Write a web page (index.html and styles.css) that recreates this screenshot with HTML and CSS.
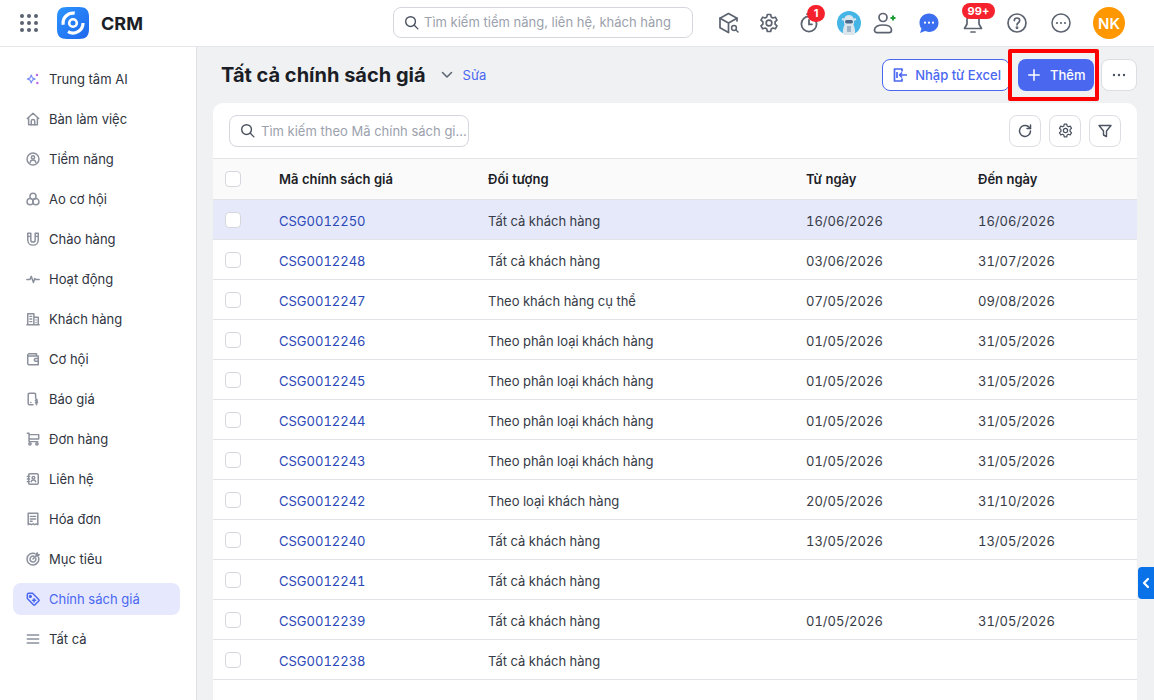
FILE: index.html
```html
<!DOCTYPE html>
<html lang="vi">
<head>
    <meta charset="UTF-8">
    <meta name="viewport" content="width=device-width, initial-scale=1.0">
    <title>Tất cả chính sách giá</title>
    <link rel="stylesheet" href="styles.css">
</head>
<body>

<header class="topbar">
    <div class="brand">
        <svg class="apps-icon" width="18" height="18" viewBox="0 0 18 18" fill="#5c6370">
            <circle cx="2" cy="2" r="2"/><circle cx="9" cy="2" r="2"/><circle cx="16" cy="2" r="2"/>
            <circle cx="2" cy="9" r="2"/><circle cx="9" cy="9" r="2"/><circle cx="16" cy="9" r="2"/>
            <circle cx="2" cy="16" r="2"/><circle cx="9" cy="16" r="2"/><circle cx="16" cy="16" r="2"/>
        </svg>
        <svg class="logo" width="32" height="32" viewBox="0 0 32 32">
            <defs>
                <linearGradient id="logoGrad" x1="0" y1="0" x2="1" y2="1">
                    <stop offset="0" stop-color="#2b95ff"/>
                    <stop offset="1" stop-color="#1f66ee"/>
                </linearGradient>
            </defs>
            <path d="M10 0h12c7 0 10 3 10 10v12c0 7-3 10-10 10H10C3 32 0 29 0 22V10C0 3 3 0 10 0z" fill="url(#logoGrad)"/>
            <g fill="none" stroke="#fff" stroke-width="3.200">
                <path d="M17.700 6.200A10 10 0 0 0 6.200 17.700"/>
                <path d="M11 24.700A10 10 0 0 0 26 16"/>
                <circle cx="16" cy="16" r="3.800" stroke-width="2.600"/>
            </g>
        </svg>
        <span class="brand-name">CRM</span>
    </div>
    <div class="top-search">
        <svg width="15" height="15" viewBox="0 0 16 16" fill="none" stroke="#4b5260" stroke-width="1.500" stroke-linecap="round"><circle cx="7" cy="7" r="5.200"/><path d="M11 11l3.800 3.800"/></svg>
        <span>Tìm kiếm tiềm năng, liên hệ, khách hàng</span>
    </div>
    <div class="top-icons">
        <div class="top-icon">
            <svg width="22" height="22" viewBox="0 0 22 22" fill="none" stroke="#5c6370" stroke-width="1.700" stroke-linejoin="round" stroke-linecap="round"><path d="M19 9V6.200L10.500 1.500 2 6.200v9.600l8.500 4.700"/><path d="M2 6.200l8.500 4.800L19 6.200M10.500 11v9"/><circle cx="16" cy="16" r="2.400" stroke-width="1.500"/><path d="M18 18l2 2" stroke-width="1.500"/></svg>
        </div>
        <div class="top-icon">
            <svg width="20" height="20" viewBox="0 0 24 24" fill="none" stroke="#5c6370" stroke-width="2" stroke-linejoin="round"><circle cx="12" cy="12" r="3.400"/><path d="M10 1.800h4l.7 3.100 1.900 1.100 3-1 2 3.500-2.300 2.100v2.800l2.300 2.100-2 3.500-3-1-1.900 1.100-.7 3.100h-4l-.7-3.100-1.900-1.100-3 1-2-3.500 2.300-2.100v-2.800L2.400 8.500l2-3.500 3 1 1.900-1.100z"/></svg>
        </div>
        <div class="top-icon">
            <svg width="20" height="20" viewBox="0 0 20 20" fill="none" stroke="#5c6370" stroke-width="1.800" stroke-linecap="round"><circle cx="10" cy="11" r="7.600"/><path d="M10 7v4.300h3M8 1.200h4"/></svg>
            <span class="badge">1</span>
        </div>
        <div class="top-icon">
            <svg width="24" height="24" viewBox="0 0 24 24">
                <circle cx="12" cy="12" r="12" fill="#45b5e6"/>
                <path d="M6 23c-.5-4 .5-7 1.500-9C6 9 7.500 4 12 4s6 5 4.500 10c1 2 2 5 1.500 9a12 12 0 0 1-12 0z" fill="#dbe5ec"/>
                <path d="M5 8l3 1M19 8l-3 1" stroke="#dbe5ec" stroke-width="2"/>
                <rect x="8" y="9" width="8" height="3.500" rx="1.700" fill="#4a6a8c"/>
                <path d="M10 15h4v6h-4z" fill="#9db4c8"/>
            </svg>
        </div>
        <div class="top-icon person">
            <svg width="24" height="22" viewBox="0 0 24 22" fill="none" stroke="#5c6370" stroke-width="1.700"><circle cx="11" cy="5.500" r="4"/><path d="M2.500 18c0-3.200 3.600-5 8.500-5s8.500 1.800 8.500 5c0 1.600-1 2.700-2.500 2.700H5c-1.500 0-2.500-1.100-2.500-2.700z"/><path d="M18.500 6h5M21 3.500v5" stroke="#1e9e3a" stroke-width="2"/></svg>
        </div>
        <div class="top-icon chat">
            <svg width="22" height="22" viewBox="0 0 22 22"><path d="M11 1.500c5.400 0 9.500 4 9.500 9.200s-4.100 9.200-9.500 9.200c-1.500 0-2.800-.3-4-.8L2 21l1.500-4.300C2.200 15 1.500 13 1.500 10.700 1.500 5.500 5.600 1.500 11 1.500z" fill="#3b6ff0"/><circle cx="7" cy="10.700" r="1.100" fill="#fff"/><circle cx="11" cy="10.700" r="1.100" fill="#fff"/><circle cx="15" cy="10.700" r="1.100" fill="#fff"/></svg>
        </div>
        <div class="top-icon bell">
            <svg width="20" height="24" viewBox="0 0 20 24" fill="none" stroke="#5c6370" stroke-width="1.700" stroke-linejoin="round" stroke-linecap="round"><path d="M10 2.500c3.500 0 6 2.600 6 6V13l2.500 4.500h-17L4 13V8.500c0-3.400 2.500-6 6-6z"/><path d="M8 21h4"/></svg>
            <span class="badge wide">99+</span>
        </div>
        <div class="top-icon">
            <svg width="20" height="20" viewBox="0 0 20 20" fill="none" stroke="#5c6370" stroke-width="1.700" stroke-linecap="round"><circle cx="10" cy="10" r="9"/><path d="M7.300 7.600c0-1.500 1.200-2.600 2.700-2.600s2.700 1 2.700 2.500c0 2.200-2.700 2.300-2.700 4.300"/><circle cx="10" cy="14.800" r=".6"/></svg>
        </div>
        <div class="top-icon">
            <svg width="20" height="20" viewBox="0 0 20 20" fill="none" stroke="#5c6370" stroke-width="1.500"><circle cx="10" cy="10" r="9"/><g fill="#5c6370" stroke="none"><circle cx="6" cy="10" r="1.100"/><circle cx="10" cy="10" r="1.100"/><circle cx="14" cy="10" r="1.100"/></g></svg>
        </div>
        <div class="user-avatar">NK</div>
    </div>
</header>

<div class="layout">
    <nav class="sidebar">
        <a class="nav-item">
            <svg viewBox="0 0 16 16"><path d="M6 3.500l1.300 3.200L10.500 8 7.300 9.300 6 12.500 4.700 9.300 1.500 8l3.200-1.300z" fill="none" stroke="#7b8cf5" stroke-width="1.300" stroke-linejoin="round"/><circle cx="12.500" cy="3.500" r="1.400" fill="#c06ae8" stroke="none"/><circle cx="13" cy="12.500" r="1.400" fill="#c06ae8" stroke="none"/></svg>
            Trung tâm AI
        </a>
        <a class="nav-item">
            <svg viewBox="0 0 16 16"><path d="M1.500 7.500L8 1.500l6.500 6M3 6.500v8h10v-8"/><path d="M6 14.500v-4c0-1 .8-1.800 2-1.800s2 .8 2 1.800v4"/></svg>
            Bàn làm việc
        </a>
        <a class="nav-item">
            <svg viewBox="0 0 16 16"><circle cx="8" cy="8" r="6.800"/><circle cx="8" cy="6.200" r="1.800"/><path d="M4.800 12c.3-2 1.600-2.800 3.200-2.800s2.900.8 3.200 2.800"/></svg>
            Tiềm năng
        </a>
        <a class="nav-item">
            <svg viewBox="0 0 16 16"><circle cx="8" cy="5" r="3.500"/><circle cx="4.700" cy="11" r="3.500"/><circle cx="11.300" cy="11" r="3.500"/></svg>
            Ao cơ hội
        </a>
        <a class="nav-item">
            <svg viewBox="0 0 16 16"><path d="M2 1.500h3.500V9c0 1.500 1 2.500 2.500 2.500s2.500-1 2.500-2.500V1.500H14V9c0 3.500-2.500 6-6 6s-6-2.500-6-6zM2 5h3.500M10.500 5H14"/></svg>
            Chào hàng
        </a>
        <a class="nav-item">
            <svg viewBox="0 0 16 16"><path d="M1 8.500h3.500L6 5l2.500 7L10 7.500l1 1h4"/></svg>
            Hoạt động
        </a>
        <a class="nav-item">
            <svg viewBox="0 0 16 16"><path d="M1 14.500h14M2 14.500V2h7v12.500M9 6h5v8.500M4.500 5h2M4.500 8h2M4.500 11h2M11.500 9v.1M11.500 12v.1"/></svg>
            Khách hàng
        </a>
        <a class="nav-item">
            <svg viewBox="0 0 16 16"><path d="M3 2h9v2.500M14 4.500H3.500C2.600 4.500 2 3.800 2 3v10c0 .9.600 1.500 1.500 1.500H14zM14 7.500h-3a1.500 1.500 0 0 0 0 3h3"/></svg>
            Cơ hội
        </a>
        <a class="nav-item">
            <svg viewBox="0 0 16 16"><path d="M11 7V2.800c0-.8-.6-1.300-1.300-1.300H4c-.8 0-1.500.5-1.500 1.300v10.400c0 .8.700 1.300 1.500 1.300h4M5.500 12h.1"/><path d="M13 9.200c-.8-.6-2.200-.4-2.200.5 0 1.200 2.400.7 2.400 2 0 1-1.500 1.200-2.400.5M12 8v6.500"/></svg>
            Báo giá
        </a>
        <a class="nav-item">
            <svg viewBox="0 0 16 16"><path d="M1.500 1.500h2v9.500h10M3.500 3h11v5h-11"/><circle cx="4.500" cy="13.500" r="1.300"/><circle cx="12.500" cy="13.500" r="1.300"/></svg>
            Đơn hàng
        </a>
        <a class="nav-item">
            <svg viewBox="0 0 16 16"><rect x="3" y="2" width="11" height="12" rx="1.500"/><circle cx="8.500" cy="6.500" r="1.500"/><path d="M6 11c.2-1.300 1.200-1.800 2.500-1.800s2.300.5 2.500 1.800M1.500 5H4M1.500 8H4M1.500 11H4"/></svg>
            Liên hệ
        </a>
        <a class="nav-item">
            <svg viewBox="0 0 16 16"><path d="M2.500 1.500h11v13l-1.800-1-1.800 1-1.900-1-1.900 1-1.800-1-1.800 1zM5 5h6M5 8h6M5 10.500h2"/></svg>
            Hóa đơn
        </a>
        <a class="nav-item">
            <svg viewBox="0 0 16 16"><path d="M14.300 6A6.700 6.700 0 1 1 10 1.700"/><path d="M11.200 7A3.400 3.400 0 1 1 9 4.800"/><path d="M8 8l5-5M11.500 2.500V4.500h2l1.500-1.500h-2V1z"/></svg>
            Mục tiêu
        </a>
        <a class="nav-item active">
            <svg viewBox="0 0 16 16"><path d="M1.500 3c0-.9.6-1.500 1.500-1.500h4.500l7 7c.5.5.5 1.300 0 1.800l-4.200 4.200c-.5.5-1.300.5-1.800 0l-7-7z"/><circle cx="5" cy="5" r="1" fill="#4a67f0"/><path d="M7.500 9.500h3.500M9.200 7.800v3.500"/></svg>
            Chính sách giá
        </a>
        <a class="nav-item">
            <svg viewBox="0 0 16 16"><path d="M1.500 3.500h13M1.500 8h13M1.500 12.500h13"/></svg>
            Tất cả
        </a>
    </nav>

    <main class="content">
        <div class="page-head">
            <h1>Tất cả chính sách giá</h1>
            <svg class="title-caret" width="12" height="8" viewBox="0 0 12 8" fill="none" stroke="#5c6370" stroke-width="1.500" stroke-linecap="round" stroke-linejoin="round"><path d="M1.500 1.500L6 6l4.500-4.500"/></svg>
            <a class="edit-link">Sửa</a>
            <div class="page-actions">
                <button class="btn-outline">
                    <svg width="14" height="14" viewBox="0 0 14 14" fill="none" stroke="#4a67f0" stroke-width="1.700" stroke-linejoin="round"><path d="M9 3.500V1H1.500v12H9v-2.500"/><path d="M4 4v6M14 7H6.500M9 4.500L6.500 7 9 9.500"/></svg>
                    Nhập từ Excel
                </button>
                <div class="add-wrap">
                    <button class="btn-primary">
                        <svg width="12" height="12" viewBox="0 0 12 12" fill="none" stroke="#fff" stroke-width="1.500" stroke-linecap="round"><path d="M6 .8v10.400M.8 6h10.400"/></svg>
                        Thêm
                    </button>
                    <span class="highlight"></span>
                </div>
                <button class="btn-more">
                    <svg width="14" height="4" viewBox="0 0 14 4" fill="#4b5260"><circle cx="2" cy="2" r="1.200"/><circle cx="7" cy="2" r="1.200"/><circle cx="12" cy="2" r="1.200"/></svg>
                </button>
            </div>
        </div>

        <section class="card">
            <div class="toolbar">
                <div class="list-search">
                    <svg width="15" height="15" viewBox="0 0 16 16" fill="none" stroke="#4b5260" stroke-width="1.500" stroke-linecap="round"><circle cx="7" cy="7" r="5.200"/><path d="M11 11l3.800 3.800"/></svg>
                    <span>Tìm kiếm theo Mã chính sách gi...</span>
                </div>
                <div class="tool-buttons">
                    <button class="btn-tool">
                        <svg width="14" height="14" viewBox="0 0 14 14" fill="none" stroke="#4b5260" stroke-width="1.500" stroke-linecap="round" stroke-linejoin="round"><path d="M12.500 7A5.500 5.500 0 1 1 10.500 2.700L12.500 4.500"/><path d="M12.500 1v3.500H9"/></svg>
                    </button>
                    <button class="btn-tool">
                        <svg width="15" height="15" viewBox="0 0 24 24" fill="none" stroke="#4b5260" stroke-width="2" stroke-linejoin="round"><circle cx="12" cy="12" r="3.400"/><path d="M10 1.800h4l.7 3.100 1.900 1.100 3-1 2 3.500-2.300 2.100v2.800l2.300 2.100-2 3.500-3-1-1.900 1.100-.7 3.100h-4l-.7-3.100-1.900-1.100-3 1-2-3.500 2.300-2.100v-2.800L2.400 8.500l2-3.500 3 1 1.900-1.100z"/></svg>
                    </button>
                    <button class="btn-tool">
                        <svg width="14" height="14" viewBox="0 0 14 14" fill="none" stroke="#4b5260" stroke-width="1.400" stroke-linejoin="round"><path d="M1 1.500h12L8.500 7v5.500l-3-1.500V7z"/></svg>
                    </button>
                </div>
            </div>

            <table class="price-table">
                <colgroup>
                    <col class="col-check"><col class="col-code"><col class="col-target"><col class="col-from"><col>
                </colgroup>
                <thead>
                    <tr>
                        <th><span class="checkbox"></span></th>
                        <th>Mã chính sách giá</th>
                        <th>Đối tượng</th>
                        <th>Từ ngày</th>
                        <th>Đến ngày</th>
                    </tr>
                </thead>
                <tbody>
                    <tr class="selected"><td><span class="checkbox"></span></td><td><a>CSG0012250</a></td><td>Tất cả khách hàng</td><td>16/06/2026</td><td>16/06/2026</td></tr>
                    <tr><td><span class="checkbox"></span></td><td><a>CSG0012248</a></td><td>Tất cả khách hàng</td><td>03/06/2026</td><td>31/07/2026</td></tr>
                    <tr><td><span class="checkbox"></span></td><td><a>CSG0012247</a></td><td>Theo khách hàng cụ thể</td><td>07/05/2026</td><td>09/08/2026</td></tr>
                    <tr><td><span class="checkbox"></span></td><td><a>CSG0012246</a></td><td>Theo phân loại khách hàng</td><td>01/05/2026</td><td>31/05/2026</td></tr>
                    <tr><td><span class="checkbox"></span></td><td><a>CSG0012245</a></td><td>Theo phân loại khách hàng</td><td>01/05/2026</td><td>31/05/2026</td></tr>
                    <tr><td><span class="checkbox"></span></td><td><a>CSG0012244</a></td><td>Theo phân loại khách hàng</td><td>01/05/2026</td><td>31/05/2026</td></tr>
                    <tr><td><span class="checkbox"></span></td><td><a>CSG0012243</a></td><td>Theo phân loại khách hàng</td><td>01/05/2026</td><td>31/05/2026</td></tr>
                    <tr><td><span class="checkbox"></span></td><td><a>CSG0012242</a></td><td>Theo loại khách hàng</td><td>20/05/2026</td><td>31/10/2026</td></tr>
                    <tr><td><span class="checkbox"></span></td><td><a>CSG0012240</a></td><td>Tất cả khách hàng</td><td>13/05/2026</td><td>13/05/2026</td></tr>
                    <tr><td><span class="checkbox"></span></td><td><a>CSG0012241</a></td><td>Tất cả khách hàng</td><td></td><td></td></tr>
                    <tr><td><span class="checkbox"></span></td><td><a>CSG0012239</a></td><td>Tất cả khách hàng</td><td>01/05/2026</td><td>31/05/2026</td></tr>
                    <tr><td><span class="checkbox"></span></td><td><a>CSG0012238</a></td><td>Tất cả khách hàng</td><td></td><td></td></tr>
                </tbody>
            </table>
        </section>

        <button class="side-tab">
            <svg width="8" height="12" viewBox="0 0 8 12" fill="none" stroke="#fff" stroke-width="2.200" stroke-linecap="round" stroke-linejoin="round"><path d="M6 2L2 6l4 4"/></svg>
        </button>
    </main>
</div>

</body>
</html>
```

FILE: styles.css
```css
* {
    box-sizing: border-box;
}
html, body {
    height: 100%;
}
body {
    margin: 0;
    overflow: hidden;
    font-family: Inter, "Noto Sans", sans-serif;
    font-size: 13px;
    color: #262a33;
    background-color: #fff;
}
button {
    font-family: inherit;
    cursor: pointer;
}

/* thanh tren cung */
.topbar {
    display: flex;
    align-items: center;
    height: 47px;
    border-bottom: 1px solid #e4e6ea;
    background: #fff;
}
.brand {
    display: flex;
    align-items: center;
    width: 393px;
    padding-left: 20px;
}
.logo {
    margin-left: 19px;
}
.brand-name {
    margin-left: 12px;
    font-size: 18px;
    font-weight: 700;
    color: #1b1e26;
}
.top-search {
    display: flex;
    align-items: center;
    gap: 5px;
    width: 300px;
    height: 31px;
    margin-bottom: 2px;
    padding: 0 10px;
    border: 1px solid #d5d7dc;
    border-radius: 8px;
    color: #9ca1ad;
}
.top-search svg,
.list-search svg {
    flex: none;
}
.top-icons {
    display: flex;
    align-items: center;
    margin-left: 16px;
}
.top-icon {
    position: relative;
    display: flex;
    align-items: center;
    justify-content: center;
    width: 40px;
    height: 32px;
}
.top-icon.person {
    width: 30px;
}
.top-icon.chat {
    width: 44px;
    margin-left: 8px;
}
.top-icon.bell {
    width: 44px;
}
.top-icon.bell ~ .top-icon {
    width: 44px;
}
.badge {
    position: absolute;
    top: -2px;
    left: 18px;
    min-width: 18px;
    height: 17px;
    border-radius: 9px;
    background: #f5222d;
    color: #fff;
    font-size: 11px;
    font-weight: 700;
    line-height: 17px;
    text-align: center;
}
.badge.wide {
    top: -4px;
    left: 11px;
    width: 33px;
    height: 16px;
    line-height: 16px;
}
.user-avatar {
    display: flex;
    align-items: center;
    justify-content: center;
    width: 32px;
    height: 32px;
    margin-left: 10px;
    border-radius: 50%;
    background: #ff9800;
    color: #fff;
    font-size: 15px;
    font-weight: 600;
}

.layout {
    display: flex;
    height: 653px;
}

/* menu ben trai */
.sidebar {
    display: flex;
    flex-direction: column;
    gap: 8px;
    width: 197px;
    padding: 16px 16px 0 13px;
    border-right: 1px solid #dfe1e5;
    background: #fff;
}
.nav-item {
    display: flex;
    align-items: center;
    gap: 9px;
    height: 32px;
    padding-left: 13px;
    border-radius: 8px;
    color: #2f3440;
}
.nav-item svg {
    flex: none;
    width: 14px;
    height: 14px;
    fill: none;
    stroke: #8b909c;
    stroke-width: 1.7;
    stroke-linecap: round;
    stroke-linejoin: round;
}
.nav-item.active {
    background: #e6e9fd;
    color: #4a67f0;
}
.nav-item.active svg {
    stroke: #4a67f0;
}

/* noi dung */
.content {
    position: relative;
    flex: 1;
    padding: 0 17px 0 16px;
    background: #f0f1f3;
}
.page-head {
    display: flex;
    align-items: center;
    height: 56px;
    padding-left: 8px;
}
h1 {
    margin: 0;
    font-size: 20px;
    font-weight: 700;
    color: #1b1e26;
}
.title-caret {
    margin-left: 15px;
}
.edit-link {
    margin-left: 10px;
    color: #4a67f0;
}
.page-actions {
    display: flex;
    align-items: center;
    margin-left: auto;
}
.btn-outline {
    display: flex;
    align-items: center;
    gap: 8px;
    height: 32px;
    padding: 0 8px 0 10px;
    border: 1px solid #4a67f0;
    border-radius: 8px;
    background: #fff;
    color: #4a67f0;
    font-size: 13px;
    font-weight: 500;
}
.add-wrap {
    position: relative;
    margin-left: 8px;
}
.btn-primary {
    display: flex;
    align-items: center;
    gap: 10px;
    width: 76px;
    height: 32px;
    padding: 0 0 0 10px;
    border: none;
    border-radius: 8px;
    background: #4a67f0;
    color: #fff;
    font-size: 13px;
    font-weight: 500;
}
.highlight {
    position: absolute;
    top: -10px;
    left: -10px;
    width: 91px;
    height: 52px;
    border: 4px solid #f00;
    border-radius: 2px;
    pointer-events: none;
}
.btn-more {
    display: flex;
    align-items: center;
    justify-content: center;
    width: 36px;
    height: 32px;
    margin-left: 7px;
    border: 1px solid #dcdee3;
    border-radius: 8px;
    background: #fff;
}

.card {
    border-radius: 10px 10px 0 0;
    background: #fff;
    height: 597px;
}
.toolbar {
    display: flex;
    align-items: center;
    justify-content: space-between;
    height: 55px;
    padding: 0 16px;
}
.list-search {
    display: flex;
    align-items: center;
    gap: 6px;
    width: 240px;
    height: 32px;
    padding: 0 10px;
    border: 1px solid #d5d7dc;
    border-radius: 8px;
    color: #9ca1ad;
    white-space: nowrap;
}
.tool-buttons {
    display: flex;
    gap: 8px;
}
.btn-tool {
    display: flex;
    align-items: center;
    justify-content: center;
    width: 32px;
    height: 32px;
    padding: 0;
    border: 1px solid #dcdee3;
    border-radius: 8px;
    background: #fff;
}

.price-table {
    width: 100%;
    border-collapse: collapse;
    table-layout: fixed;
    font-variant-numeric: tabular-nums;
}
.col-check {
    width: 66px;
}
.col-code {
    width: 209px;
}
.col-target {
    width: 318px;
}
.col-from {
    width: 172px;
}
.price-table th,
.price-table td {
    height: 40px;
    padding: 0;
    border-bottom: 1px solid #e2e3e6;
    text-align: left;
    vertical-align: middle;
}
.price-table th {
    height: 41px;
    border-top: 1px solid #e2e3e6;
    background: #fafafa;
    font-weight: 600;
    color: #1b1e26;
}
.price-table td {
    color: #363b47;
}
.price-table td + td {
    padding-top: 2px;
}
.price-table td a {
    color: #2b49b8;
}
.price-table tr.selected td {
    background: #e6e9fa;
}
.checkbox {
    display: block;
    width: 16px;
    height: 16px;
    margin-left: 12px;
    border: 1px solid #d5d7dc;
    border-radius: 4px;
    background: #fff;
}

.side-tab {
    position: absolute;
    top: 520px;
    right: 0;
    display: flex;
    align-items: center;
    justify-content: center;
    width: 16px;
    height: 32px;
    padding: 0;
    border: none;
    border-radius: 4px 0 0 4px;
    background: #0a72e8;
}
```
